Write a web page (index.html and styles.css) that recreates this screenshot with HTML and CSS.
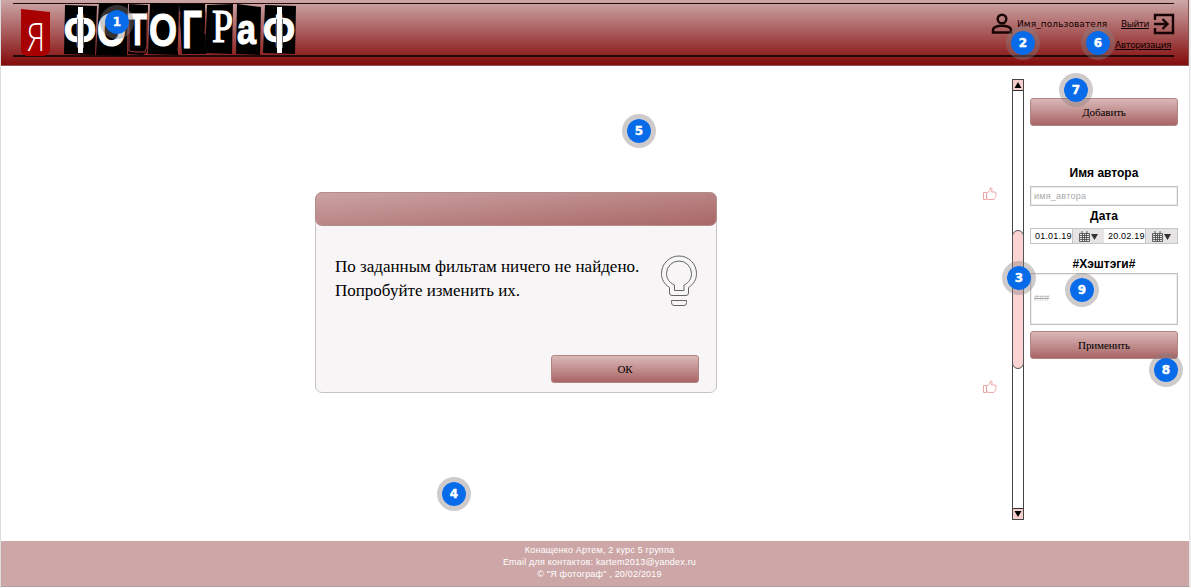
FILE: index.html
```html
<!DOCTYPE html>
<html lang="ru">
<head>
<meta charset="utf-8">
<title>Я фотограф</title>
<link rel="stylesheet" href="styles.css">
</head>
<body>
<div class="page">
  <header class="header">
    <div class="header-inner">
      <svg class="logo" width="290" height="60" viewBox="13 0 290 60">
        <path class="red-tile" d="M21 9L50 12L50 50Q48 56 42 56H27Q21 55 21 49Z"/>
        <g class="tiles">
          <path d="M65 5L97 6L95 55L64 54Z"/><path d="M99 3L128 4L127 56L96 55Z"/>
          <path d="M129 4L148 5L147 52L143 55L128 54Z"/><path d="M150 3L179 4L178 55L148 54Z"/>
          <path d="M179 4L205 4L206 54L182 54Z"/><path d="M207 5L233 4L232 54L205 53Z"/>
          <path d="M237 4L261 7L260 55L236 54Z"/><path d="M265 5L296 6L295 54L263 53Z"/>
        </g>
        <path class="tear" d="M129 15V51L136 52H145L147 46V12M180 12L178 51L180 54M206 12L205 34"/>
        <g class="letters">
          <text class="thin" x="27" y="51" font-size="38" textLength="18" lengthAdjust="spacingAndGlyphs">Я</text>
          <text x="64" y="46" font-size="45" textLength="32" lengthAdjust="spacingAndGlyphs">Ф</text>
          <text x="97" y="46" font-size="46" textLength="29" lengthAdjust="spacingAndGlyphs">О</text>
          <text x="128" y="45" font-size="45" textLength="19" lengthAdjust="spacingAndGlyphs">Т</text>
          <text x="149" y="46" font-size="46" textLength="28" lengthAdjust="spacingAndGlyphs">О</text>
          <text x="182" y="48" font-size="54" textLength="20" lengthAdjust="spacingAndGlyphs">Г</text>
          <text class="serif" x="212" y="42" font-size="46" textLength="21" lengthAdjust="spacingAndGlyphs">Р</text>
          <text x="237" y="44" font-size="42" textLength="19" lengthAdjust="spacingAndGlyphs">а</text>
          <text x="263" y="46" font-size="45" textLength="32" lengthAdjust="spacingAndGlyphs">Ф</text>
        </g>
        <path class="stems" d="M78 7h5v8h-5zM78 45h5v8h-5zM277 7h5v8h-5zM277 45h5v8h-5z"/>
        <path class="cuts" d="M77.500 19V48M83.500 19V48M276.500 19V48M282.500 19V48"/>
      </svg>
      <div class="account">
        <div class="account-row">
          <svg class="user-icon" width="22" height="22" viewBox="0 0 22 22"><circle cx="11" cy="6" r="4.300"/><path d="M2 19.500V17C2 14.500 6 12.800 11 12.800S20 14.500 20 17V19.500Z"/></svg>
          <span class="user-name">Имя_пользователя</span>
          <a class="exit">Выйти</a>
          <svg class="exit-icon" width="22" height="22" viewBox="0 0 22 22"><path d="M2 7V2H20V20H2V15M1 11H14M9.500 6L14.500 11L9.500 16"/></svg>
        </div>
        <a class="auth">Авторизация</a>
      </div>
    </div>
  </header>
  <main class="main">
    <section class="gallery">
      <div class="dialog">
        <div class="dialog-head"></div>
        <div class="dialog-body">
          <p class="message">По заданным фильтам ничего не найдено.<br>Попробуйте изменить их.</p>
          <svg class="bulb" width="38" height="52" viewBox="0 0 38 52"><path d="M9.500 32.500C4 29 1.500 24 1.500 18.500A17.500 17.500 0 0 1 36.500 18.500C36.500 24 34 29 28.500 32.500V38Q28.500 40.500 26 40.500H12Q9.500 40.500 9.500 38ZM14.500 35.500V30C9 27.500 6.500 23.500 6.500 18.500A12.500 12.500 0 0 1 31.500 18.500C31.500 23.500 29 27.500 24 30V35.500ZM11.500 45.500H26.500V47.500Q26.500 50.500 24 50.500H14Q11.500 50.500 11.500 47.500Z"/></svg>
          <button class="button ok"><span>ОК</span></button>
        </div>
      </div>
      <div class="likes">
        <svg width="14" height="14" viewBox="0 0 14 14"><path d="M.5 5.500H3.500V12.500H.5ZM3.500 6.500L6.500 4L7.500 1Q9.500.5 9 3L8.500 5H12Q14 5.500 12.800 7.500Q13.500 8.500 12.500 9.500Q12.800 11 11.500 11.500Q11.500 12.500 10 12.500H6L3.500 11.500"/></svg>
        <svg width="14" height="14" viewBox="0 0 14 14"><path d="M.5 5.500H3.500V12.500H.5ZM3.500 6.500L6.500 4L7.500 1Q9.500.5 9 3L8.500 5H12Q14 5.500 12.800 7.500Q13.500 8.500 12.500 9.500Q12.800 11 11.500 11.500Q11.500 12.500 10 12.500H6L3.500 11.500"/></svg>
      </div>
    </section>
    <div class="scrollbar">
      <div class="arrow"><svg width="10" height="10" viewBox="0 0 10 10"><path d="M5 2L8.500 8H1.500Z"/></svg></div>
      <div class="track"><div class="thumb"></div></div>
      <div class="arrow"><svg width="10" height="10" viewBox="0 0 10 10"><path d="M5 8L8.500 2H1.500Z"/></svg></div>
    </div>
    <aside class="sidebar">
      <button class="button add"><span>Добавить</span></button>
      <h2 class="title author-title">Имя автора</h2>
      <div class="field author">имя_автора</div>
      <h2 class="title date-title">Дата</h2>
      <div class="dates">
        <div class="date"><span class="date-value">01.01.19</span><span class="picker"><svg width="20" height="11" viewBox="0 0 20 11"><path class="cal" d="M.5 2.500H10.500V10.500H.5ZM1 4.500H10M1 6.500H10M1 8.500H10M3.500 3V10M5.500 3V10M7.500 3V10M3 0V3M8 0V3"/><path d="M12 3H19L15.500 9Z"/></svg></span></div>
        <div class="date"><span class="date-value">20.02.19</span><span class="picker"><svg width="20" height="11" viewBox="0 0 20 11"><path class="cal" d="M.5 2.500H10.500V10.500H.5ZM1 4.500H10M1 6.500H10M1 8.500H10M3.500 3V10M5.500 3V10M7.500 3V10M3 0V3M8 0V3"/><path d="M12 3H19L15.500 9Z"/></svg></span></div>
      </div>
      <h2 class="title tag-title">#Хэштэги#</h2>
      <div class="field tags">###</div>
      <button class="button apply"><span>Применить</span></button>
    </aside>
  </main>
  <footer class="footer">
    <div class="f1">Конащенко Артем, 2 курс 5 группа</div>
    <div class="f2">Email для контактов: kartem2013@yandex.ru</div>
    <div class="f3">© "Я фотограф" , 20/02/2019</div>
  </footer>
  <span class="marker m1">1</span><span class="marker m2">2</span><span class="marker m3">3</span>
  <span class="marker m4">4</span><span class="marker m5">5</span><span class="marker m6">6</span>
  <span class="marker m7">7</span><span class="marker m8">8</span><span class="marker m9">9</span>
</div>
</body>
</html>
```
FILE: styles.css
```css
* { box-sizing: border-box; }
body { margin: 0; background: #f1f0f0; font-family: "Liberation Sans", Arial, sans-serif; overflow: hidden; }
.page { position: relative; width: 1190px; height: 588px; background: #fff; border-right: 1px solid #e6e6e6; border-left: 1px solid #ddd; display: flex; flex-direction: column; }
.header { height: 66px; padding: 3px 14px 0 12px; background: linear-gradient(#cda8a8, #840b0b); border: 1px solid #8b5555; border-width: 0 1px 1px 0; }
.header-inner { height: 54px; border: solid #210909; border-width: 1px 0 2px; display: flex; justify-content: space-between; }
.logo { margin-top: -4px; flex: none; overflow: visible; }
.red-tile { fill: #a80000; }
.tear { fill: none; stroke: #a33a3a; stroke-width: 1; }
.letters { fill: #fff; font-weight: bold; stroke: #fff; stroke-width: 1.2; }
.thin { font-family: "Open Sans", sans-serif; font-weight: 300; stroke: none; }
.serif { font-family: "Liberation Serif", serif; font-weight: normal; }
.stems { fill: #fff; }
.cuts { stroke: #666; stroke-width: 1; }
.account { width: 183px; padding-top: 8px; display: flex; flex-direction: column; }
.account-row { height: 24px; display: flex; align-items: center; }
.user-icon, .exit-icon { fill: none; stroke: #170404; stroke-width: 2.4; flex: none; }
.user-name, .exit, .auth { font: 9px/12px "DejaVu Sans", sans-serif; color: #100; white-space: nowrap; }
.user-name { width: 90px; margin-left: 4px; letter-spacing: .08px; }
.exit { margin-left: 14px; letter-spacing: -.45px; text-decoration: underline; }
.exit-icon { margin-left: auto; margin-right: -1px; }
.auth { align-self: flex-end; margin: 3px 3px 0 0; letter-spacing: -.5px; text-decoration: underline; }
.main { height: 475px; display: flex; }
.gallery { width: 1011px; padding: 126px 15px 0 314px; display: flex; justify-content: space-between; align-items: flex-start; }
.dialog { width: 402px; height: 201px; background: #f7f5f6; border: 1px solid #c8c4c5; border-radius: 7px; }
.dialog-head { height: 34px; margin: -1px; background: linear-gradient(175deg, #cba3a3, #a96767); border: 1px solid #b38c8c; border-radius: 7px; }
.dialog-body { display: grid; grid-template-columns: 326px 38px; grid-template-rows: 98px 28px; padding: 30px 17px 0 19px; }
.message { margin: 0; font: 17px/24px "Liberation Serif", serif; color: #000; white-space: nowrap; }
.bulb { margin-left: -1px; fill: none; stroke: #666; stroke-width: 1; }
.button { width: 148px; height: 28px; padding: 0; border: 1px solid #b18383; border-radius: 3px; background: linear-gradient(#dab8b8, #a96565); font: 11px/26px "Liberation Serif", serif; letter-spacing: -.1px; color: #000; }
.ok { grid-column: 1 / 3; justify-self: end; margin-top: 2px; }
.likes { width: 14px; margin-top: -5px; display: flex; flex-direction: column; gap: 179px; fill: none; stroke: #efa5a5; stroke-width: 1; }
.scrollbar { width: 12px; height: 441px; margin-top: 13px; border: 1px solid #444; display: flex; flex-direction: column; }
.arrow { height: 11px; background: #f7cece; border-bottom: 1px solid #333; display: flex; }
.arrow:last-child { border-bottom: 0; border-top: 1px solid #333; }
.track { flex: 1; padding-top: 139px; }
.thumb { width: 12px; height: 139px; margin-left: -1px; background: #fbd3d3; border: 1px solid #555; border-radius: 6px; }
.sidebar { width: 148px; margin-left: 6px; padding-top: 32px; display: flex; flex-direction: column; }
.title { margin: 0; text-align: center; font-size: 12px; line-height: 16px; }
.author-title { margin-top: 39px; }
.field { border: 1px solid #c4c0c0; outline: 1px solid #eee; outline-offset: -2px; color: #aaa; font-size: 9px; display: flex; align-items: center; padding-left: 3px; }
.author { height: 20px; margin-top: 5px; letter-spacing: .25px; }
.date-title { margin-top: 2px; }
.dates { height: 16px; margin-top: 4px; display: flex; border: 1px solid #c6c4c4; }
.date { flex: 1; display: flex; }
.date-value { width: 41px; padding-left: 4px; font: 9px/15px "Liberation Sans", sans-serif; letter-spacing: .2px; white-space: nowrap; }
.picker { flex: 1; display: flex; justify-content: center; align-items: center; background: #e5e3e3; border-left: 1px solid #c6c4c4; fill: #333; }
.cal { fill: none; stroke: #444; stroke-width: .8; }
.tag-title { margin-top: 12px; }
.tags { height: 52px; margin-top: 1px; padding-bottom: 2px; font-style: italic; text-decoration: line-through; }
.apply { margin-top: 6px; }
.footer { height: 46px; padding-top: 3px; background: #cda7a7; border-bottom: 1px solid #ada0a0; text-align: center; color: #fff; font-size: 9px; line-height: 12px; letter-spacing: .2px; }
.footer div { width: 1197px; }
.marker { position: absolute; width: 34px; height: 34px; border: 5px solid rgba(135, 125, 125, .4); border-radius: 50%; background: #086be9; background-clip: padding-box; color: #fff; -webkit-text-stroke: .4px #fff; font: bold 12px/24px "DejaVu Sans", sans-serif; text-align: center; }
.m1 { left: 99px; top: 5px; } .m2 { left: 1005px; top: 26px; }
.m3 { left: 1001px; top: 261px; } .m4 { left: 436px; top: 477px; }
.m5 { left: 621px; top: 114px; } .m6 { left: 1080px; top: 26px; }
.m7 { left: 1058px; top: 73px; } .m8 { left: 1148px; top: 353px; }
.m9 { left: 1064px; top: 273px; }
```
